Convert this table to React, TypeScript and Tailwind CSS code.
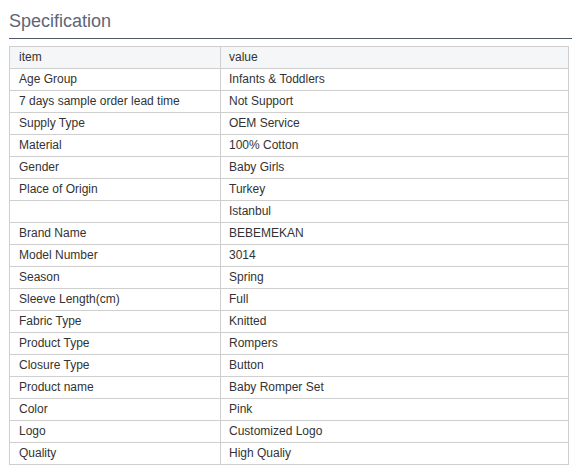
import React from "react";

const rows: [string, string][] = [
  ["Age Group", "Infants & Toddlers"],
  ["7 days sample order lead time", "Not Support"],
  ["Supply Type", "OEM Service"],
  ["Material", "100% Cotton"],
  ["Gender", "Baby Girls"],
  ["Place of Origin", "Turkey"],
  ["", "Istanbul"],
  ["Brand Name", "BEBEMEKAN"],
  ["Model Number", "3014"],
  ["Season", "Spring"],
  ["Sleeve Length(cm)", "Full"],
  ["Fabric Type", "Knitted"],
  ["Product Type", "Rompers"],
  ["Closure Type", "Button"],
  ["Product name", "Baby Romper Set"],
  ["Color", "Pink"],
  ["Logo", "Customized Logo"],
  ["Quality", "High Qualiy"],
];

export default function App() {
  return (
    <div className="w-[580px] h-[476px] bg-white pl-[9px] pr-[8px] pt-[9px]" style={{ fontFamily: '"Liberation Sans", Arial, sans-serif' }}>
      <div className="border-b border-[#4f5a6b] h-[30px] text-[18px] leading-[24px] text-[#5d6577]">Specification</div>
      <table className="mt-[7px] w-[560px] border-collapse text-[12px] text-[#333]">
        <tbody>
          <tr className="bg-[#f5f6f8] h-[22px]">
            <td className="border border-[#cfcfcf] pl-[9px] w-[211px] p-0 leading-[21px]">item</td>
            <td className="border border-[#cfcfcf] pl-[8px] p-0 leading-[21px]">value</td>
          </tr>
          {rows.map(([k, v], i) => (
            <tr key={i} className="h-[22px]">
              <td className="border border-[#cfcfcf] pl-[9px] p-0 leading-[21px]">{k}</td>
              <td className="border border-[#cfcfcf] pl-[8px] p-0 leading-[21px]">{v}</td>
            </tr>
          ))}
        </tbody>
      </table>
    </div>
  );
}
